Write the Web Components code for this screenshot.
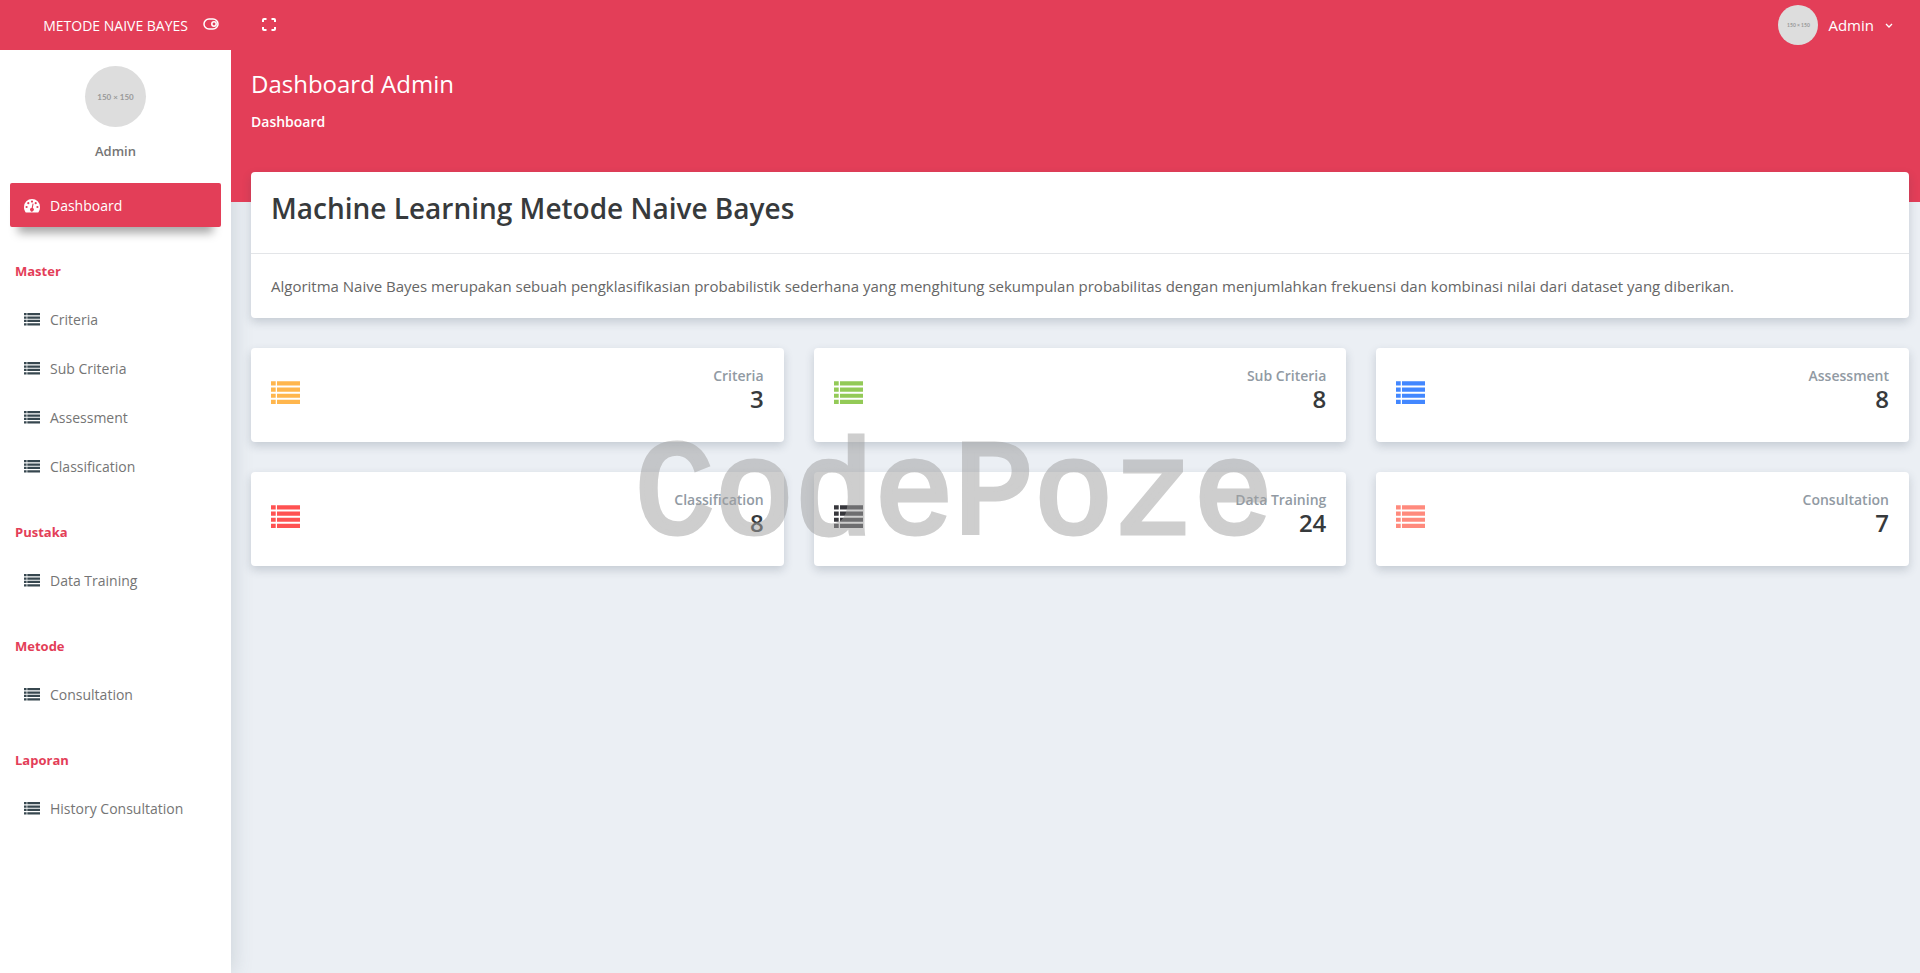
<!DOCTYPE html>
<html lang="id">
<head>
<meta charset="utf-8">
<title>Metode Naive Bayes</title>
<style>
  body {
    margin: 0;
    background: #ebeff4;
    font-family: "Open Sans", sans-serif;
    font-size: 14px;
    line-height: 20px;
    color: #666;
  }
</style>
</head>
<body>
<admin-layout>
  <top-bar slot="header" brand="METODE NAIVE BAYES" user="Admin"></top-bar>

  <side-bar slot="sidebar" user="Admin">
    <nav-item icon="dashboard" active>Dashboard</nav-item>
    <nav-group label="Master">
      <nav-item>Criteria</nav-item>
      <nav-item>Sub Criteria</nav-item>
      <nav-item>Assessment</nav-item>
      <nav-item>Classification</nav-item>
    </nav-group>
    <nav-group label="Pustaka">
      <nav-item>Data Training</nav-item>
    </nav-group>
    <nav-group label="Metode">
      <nav-item>Consultation</nav-item>
    </nav-group>
    <nav-group label="Laporan">
      <nav-item>History Consultation</nav-item>
    </nav-group>
  </side-bar>

  <page-title crumb="Dashboard">Dashboard Admin</page-title>
  <info-card heading="Machine Learning Metode Naive Bayes">Algoritma Naive Bayes merupakan sebuah pengklasifikasian probabilistik sederhana yang menghitung sekumpulan probabilitas dengan menjumlahkan frekuensi dan kombinasi nilai dari dataset yang diberikan.</info-card>
  <stat-grid>
    <stat-card label="Criteria" color="#ffb64d">3</stat-card>
    <stat-card label="Sub Criteria" color="#93ca57">8</stat-card>
    <stat-card label="Assessment" color="#4287ff">8</stat-card>
    <stat-card label="Classification" color="#ff5252">8</stat-card>
    <stat-card label="Data Training" color="#37373c">24</stat-card>
    <stat-card label="Consultation" color="#ff8a7d">7</stat-card>
  </stat-grid>
</admin-layout>
<water-mark>CodePoze</water-mark>

<script>
const listIcon = `
  <svg viewBox="0 0 16 14" fill="currentColor" aria-hidden="true">
    <path d="M0 0h2.600v2.300H0zM3.300 0H16v2.300H3.300zM0 3.400h2.600v2.300H0zM3.300 3.400H16v2.300H3.300zM0 6.800h2.600v2.300H0zM3.300 6.800H16v2.300H3.300zM0 10.200h2.600v2.300H0zM3.300 10.200H16v2.300H3.300z"/>
  </svg>`;

const dashboardIcon = `
  <svg viewBox="0 0 16 14" aria-hidden="true">
    <path fill="currentColor" d="M8 0a8 8 0 0 0-8 8c0 2 .5 3.500 1.400 5 .2.400.5.500 1 .5h11.200c.5 0 .8-.1 1-.5A9 9 0 0 0 16 8a8 8 0 0 0-8-8z"/>
    <g fill="#e33e58">
      <circle cx="2.600" cy="8" r="1.100"/><circle cx="4.300" cy="4.200" r="1.100"/><circle cx="8" cy="2.600" r="1.100"/>
      <circle cx="11.700" cy="4.200" r="1.100"/><circle cx="13.400" cy="8" r="1.100"/>
      <path d="M8.600 4.600l1 .2-.8 4.300a1.800 1.800 0 1 1-1.200-.2z"/>
    </g>
  </svg>`;

class AdminLayout extends HTMLElement {
  constructor() {
    super();
    this.attachShadow({ mode: "open" });
    this.shadowRoot.innerHTML = `
    <style>
      :host {
        display: grid;
        grid-template-columns: 231px 1fr;
        grid-template-rows: 50px 1fr;
        min-height: 100vh;
      }
      header {
        grid-column: 1 / -1;
        z-index: 1;
      }
      aside {
        background: #fff;
        box-shadow: 1px 0 20px rgba(69, 90, 100, 0.2);
      }
      /* the red band runs on behind the first card */
      main {
        padding: 19px 11px 30px 20px;
        background: linear-gradient(#e33e58 152px, transparent 152px);
      }
    </style>
    <header><slot name="header"></slot></header>
    <aside><slot name="sidebar"></slot></aside>
    <main><slot></slot></main>
    `;
  }
}

class TopBar extends HTMLElement {
  constructor() {
    super();
    this.attachShadow({ mode: "open" });
    this.shadowRoot.innerHTML = `
    <style>
      :host {
        display: flex;
        align-items: center;
        height: 50px;
        background: #e33e58;
        color: #fff;
      }
      .brand {
        box-sizing: border-box;
        width: 231px;
        padding-right: 12px;
        display: flex;
        align-items: center;
        justify-content: flex-end;
        gap: 15px;
      }
      a {
        padding-top: 2px;
        color: inherit;
        text-decoration: none;
      }
      button {
        display: flex;
        align-items: center;
        padding: 0;
        border: 0;
        background: none;
        color: inherit;
        font: inherit;
        cursor: pointer;
      }
      svg {
        display: block;
        fill: none;
        stroke: currentColor;
      }
      .full {
        margin-left: 30px;
      }
      .user {
        margin: 0 26px 0 auto;
        gap: 10px;
        font-size: 15px;
      }
    </style>
    <div class="brand">
      <a href="#">${this.getAttribute("brand")}</a>
      <button aria-label="Toggle sidebar">
        <svg width="16" height="16" viewBox="0 0 16 16" stroke-width="1.500">
          <rect x="1" y="2" width="14" height="10" rx="5"/>
          <circle cx="11" cy="7" r="2.200"/>
        </svg>
      </button>
    </div>
    <button class="full" aria-label="Full screen">
      <svg width="16" height="16" viewBox="0 0 16 16" stroke-width="2">
        <path d="M2 5V3a1 1 0 0 1 1-1h2.500M10.500 2H13a1 1 0 0 1 1 1v2M14 10v2a1 1 0 0 1-1 1h-2.500M5.500 13H3a1 1 0 0 1-1-1v-2"/>
      </svg>
    </button>
    <button class="user">
      <user-avatar size="40"></user-avatar>
      <span>${this.getAttribute("user")}</span>
      <svg width="10" height="10" viewBox="0 0 10 10" stroke-width="1.300"><path d="M2 4l3 3 3-3"/></svg>
    </button>
    `;
  }
}

class UserAvatar extends HTMLElement {
  constructor() {
    super();
    const size = this.getAttribute("size");
    this.attachShadow({ mode: "open" });
    this.shadowRoot.innerHTML = `
    <style>
      :host {
        display: flex;
        align-items: center;
        justify-content: center;
        width: ${size}px;
        height: ${size}px;
        border-radius: 50%;
        background: #ddd;
        color: #999;
        font: bold ${size > 50 ? 8 : 5}px/1 Lato, sans-serif;
      }
    </style>
    <span>150 × 150</span>
    `;
  }
}

class SideBar extends HTMLElement {
  constructor() {
    super();
    this.attachShadow({ mode: "open" });
    this.shadowRoot.innerHTML = `
    <style>
      :host {
        display: block;
        padding: 16px 10px 30px;
      }
      .profile {
        display: flex;
        flex-direction: column;
        align-items: center;
        gap: 14px;
        margin-bottom: 22px;
        font-size: 13px;
        font-weight: 600;
        color: #757575;
      }
    </style>
    <div class="profile">
      <user-avatar size="61"></user-avatar>
      <span>${this.getAttribute("user")}</span>
    </div>
    <nav><slot></slot></nav>
    `;
  }
}

class NavGroup extends HTMLElement {
  constructor() {
    super();
    this.attachShadow({ mode: "open" });
    this.shadowRoot.innerHTML = `
    <style>
      :host {
        display: block;
      }
      div {
        padding: 29px 5px 16px;
        color: #e33e58;
        font-size: 13px;
        font-weight: 700;
      }
    </style>
    <div>${this.getAttribute("label")}</div>
    <slot></slot>
    `;
  }
}

class NavItem extends HTMLElement {
  constructor() {
    super();
    const icon = this.getAttribute("icon") === "dashboard" ? dashboardIcon : listIcon;
    this.attachShadow({ mode: "open" });
    this.shadowRoot.innerHTML = `
    <style>
      :host {
        display: block;
        margin-bottom: 5px;
      }
      a {
        display: flex;
        align-items: center;
        gap: 10px;
        padding: 13px 14px 11px;
        border-radius: 2px;
        color: #757575;
        text-decoration: none;
      }
      svg {
        width: 16px;
        height: 14px;
        color: #37474f;
      }
      :host([active]) a {
        background: #e33e58;
        color: #fff;
        box-shadow: 0 14px 10px -8px rgba(0, 0, 0, 0.35);
      }
      :host([active]) svg {
        color: #fff;
      }
    </style>
    <a href="#">${icon}<span><slot></slot></span></a>
    `;
  }
}

class PageTitle extends HTMLElement {
  constructor() {
    super();
    this.attachShadow({ mode: "open" });
    this.shadowRoot.innerHTML = `
    <style>
      :host {
        display: block;
        margin-bottom: 40px;
        color: #fff;
      }
      h1 {
        margin: 0 0 14px;
        font-size: 24px;
        font-weight: 400;
        line-height: 29px;
      }
      a {
        display: block;
        color: inherit;
        font-weight: 600;
        text-decoration: none;
      }
    </style>
    <h1><slot></slot></h1>
    <a href="#">${this.getAttribute("crumb")}</a>
    `;
  }
}

class InfoCard extends HTMLElement {
  constructor() {
    super();
    this.attachShadow({ mode: "open" });
    this.shadowRoot.innerHTML = `
    <style>
      :host {
        display: block;
        margin-bottom: 30px;
        border-radius: 4px;
        background: #fff;
        box-shadow: 0 4px 10px rgba(43, 61, 81, 0.2);
      }
      h2 {
        margin: 0;
        padding: 20px 20px 28px;
        border-bottom: 1px solid #e3e5e8;
        color: #373a3c;
        font-size: 28px;
        font-weight: 600;
        line-height: 33px;
      }
      p {
        margin: 0;
        padding: 22px 20px;
        font-size: 15px;
      }
    </style>
    <h2>${this.getAttribute("heading")}</h2>
    <p><slot></slot></p>
    `;
  }
}

class StatGrid extends HTMLElement {
  constructor() {
    super();
    this.attachShadow({ mode: "open" });
    this.shadowRoot.innerHTML = `
    <style>
      :host {
        display: grid;
        grid-template-columns: repeat(3, 1fr);
        gap: 30px;
      }
    </style>
    <slot></slot>
    `;
  }
}

class StatCard extends HTMLElement {
  constructor() {
    super();
    this.attachShadow({ mode: "open" });
    this.shadowRoot.innerHTML = `
    <style>
      :host {
        display: flex;
        align-items: center;
        justify-content: space-between;
        padding: 18px 20px 26px;
        border-radius: 4px;
        background: #fff;
        box-shadow: 0 4px 10px rgba(43, 61, 81, 0.2);
      }
      svg {
        width: 29px;
        height: 26px;
        margin-top: 6px;
        color: ${this.getAttribute("color")};
      }
      div {
        text-align: right;
      }
      h6 {
        margin: 0;
        color: #919aa3;
        font-size: 14px;
        font-weight: 600;
      }
      strong {
        display: block;
        padding-bottom: 4px;
        color: #373a3c;
        font-size: 24px;
        font-weight: 600;
        line-height: 26px;
      }
    </style>
    ${listIcon}
    <div>
      <h6>${this.getAttribute("label")}</h6>
      <strong><slot></slot></strong>
    </div>
    `;
  }
}

class WaterMark extends HTMLElement {
  constructor() {
    super();
    this.attachShadow({ mode: "open" });
    // fixed to the middle of the window, clicks go through to the cards
    this.shadowRoot.innerHTML = `
    <style>
      :host {
        position: fixed;
        inset: 22px 12px 0 0;
        display: flex;
        align-items: center;
        justify-content: center;
        color: #a1a1a1;
        font: 133px/1 "Liberation Mono", monospace;
        -webkit-text-stroke: 5px #a1a1a1;
        opacity: 0.52;
        pointer-events: none;
      }
    </style>
    <slot></slot>
    `;
  }
}

customElements.define("admin-layout", AdminLayout);
customElements.define("user-avatar", UserAvatar);
customElements.define("top-bar", TopBar);
customElements.define("side-bar", SideBar);
customElements.define("nav-group", NavGroup);
customElements.define("nav-item", NavItem);
customElements.define("page-title", PageTitle);
customElements.define("info-card", InfoCard);
customElements.define("stat-grid", StatGrid);
customElements.define("stat-card", StatCard);
customElements.define("water-mark", WaterMark);
</script>
</body>
</html>
